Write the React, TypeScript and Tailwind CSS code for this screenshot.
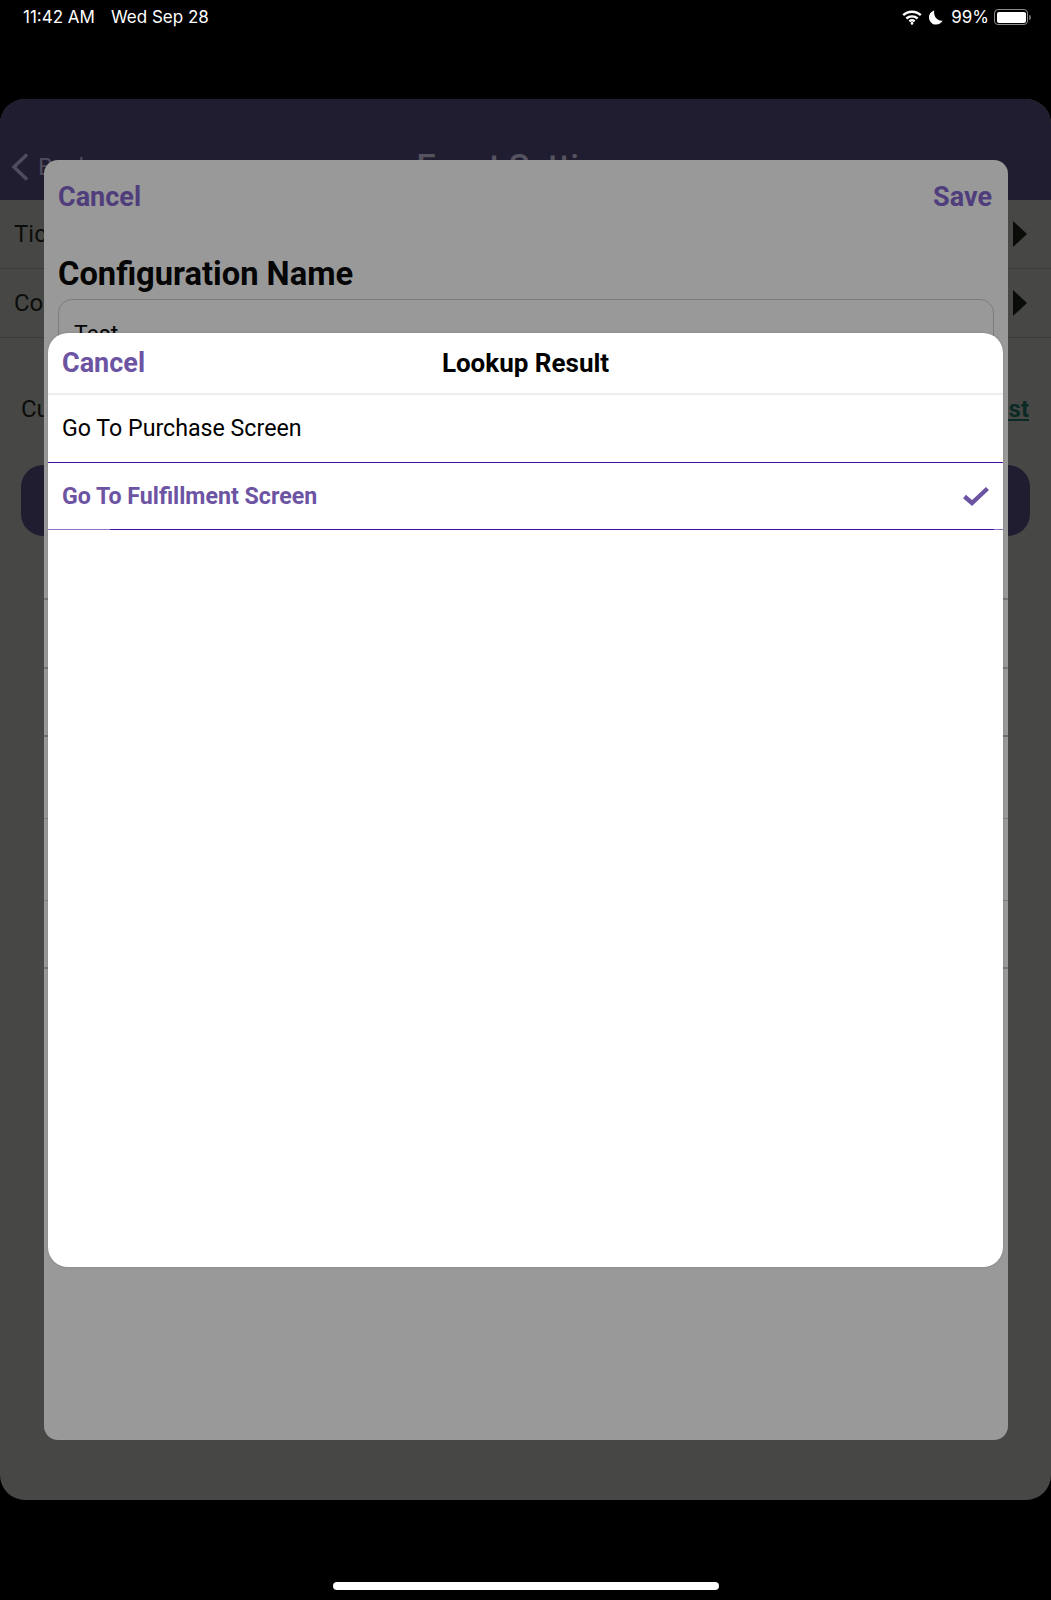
const roboto = "font-['Roboto',sans-serif]"

function WifiIcon() {
  return (
    <svg width="20" height="15" viewBox="0 0 20 15" fill="none" stroke="white" strokeWidth="2.4">
      <path d="M1.2 5.2C6 .6 14 .6 18.8 5.2" />
      <path d="M4.4 8.5C7.4 5.7 12.6 5.7 15.6 8.5" />
      <path d="M7.4 11.4C8.9 10.2 11.1 10.2 12.6 11.4" />
      <circle cx="10" cy="13.4" r="1.3" fill="white" stroke="none" />
    </svg>
  )
}

function MoonIcon() {
  return (
    <svg width="14" height="15" viewBox="0 0 14 15" fill="white">
      <path d="M5.2.6C2.2 1.4 0 4.1 0 7.4 0 11.4 3.2 14.6 7.2 14.6 10 14.6 12.4 13 13.6 10.7 9 11.4 4.3 7.2 5.2.6Z" />
    </svg>
  )
}

function BatteryIcon() {
  return (
    <div className="flex items-center">
      <div className="h-[16px] w-[34px] rounded-[4px] border border-[#8a8a8a] p-[1.5px]">
        <div className="h-full w-full rounded-[2px] bg-white" />
      </div>
      <div className="ml-[1px] h-[5px] w-[2px] rounded-r-[2px] bg-[#6f6f6f]" />
    </div>
  )
}

function StatusBar() {
  return (
    <div className="flex h-[99px] shrink-0 items-start justify-between pl-[23px] pr-[20px] pt-[7px] font-['Inter',sans-serif] text-[17px] leading-[20px] text-white">
      <div className="flex gap-[16px]">
        <span>11:42 AM</span>
        <span>Wed Sep 28</span>
      </div>
      <div className="flex items-center">
        <WifiIcon />
        <div className="ml-[7px]">
          <MoonIcon />
        </div>
        <span className="ml-[8px] mr-[5px]">99%</span>
        <BatteryIcon />
      </div>
    </div>
  )
}

function BackRow({ label }: { label: string }) {
  return (
    <div className="flex h-[69px] items-center justify-between border-b border-[#3b3c39] pl-[14px] pr-[24px] text-[24px] text-[#0c0d0b]">
      <span>{label}</span>
      <div className="h-0 w-0 border-y-[13px] border-l-[14px] border-y-transparent border-l-[#0a0c08]" />
    </div>
  )
}

function BackPage() {
  return (
    <div className={`flex h-[1401px] shrink-0 flex-col overflow-hidden rounded-[25px] bg-[#474845] ${roboto}`}>
      <div className="grid h-[101px] shrink-0 grid-cols-[1fr_auto_1fr] items-start bg-[#211d30] pt-[47px]">
        <div className="mt-[6px] flex items-center pl-[11px] text-[24px] leading-[30px] text-[#4f4b5c]">
          <svg width="18" height="28" viewBox="0 0 18 28" fill="none" stroke="#4f4b5c" strokeWidth="3.6">
            <path d="M16 1.5L3 14L16 26.5" />
          </svg>
          <span className="ml-[9px]">Back</span>
        </div>
        <span className="text-[34px] font-medium leading-[40px] text-[#565360]">Event Settings</span>
      </div>
      <BackRow label="Tickets" />
      <BackRow label="Configurations" />
      <div className="flex items-center justify-between pl-[21px] pr-[22px] pt-[55px] text-[24px] leading-[32px] text-[#0c0d0b]">
        <span>Current Configuration</span>
        <span className="font-bold text-[#0b2a26] underline">Test</span>
      </div>
      <div className="mx-[21px] mt-[40px] h-[71px] rounded-[22px] bg-[#211d30]" />
    </div>
  )
}

function ConfigSheet() {
  return (
    <div className={`absolute left-[44px] top-[160px] flex h-[1280px] w-[964px] flex-col overflow-hidden rounded-[14px] bg-[#999999] ${roboto}`}>
      <div className="flex items-center justify-between pl-[14px] pr-[16px] pt-[22px] text-[27px] font-bold leading-[30px] text-[#4f3d7c]">
        <span>Cancel</span>
        <span>Save</span>
      </div>
      <h2 className="ml-[14px] mt-[42px] text-[32.7px] font-bold leading-[40px] text-[#050505]">Configuration Name</h2>
      <div className="mx-[14px] mt-[5px] h-[72px] shrink-0 rounded-[14px] border-[1.5px] border-[#7d7d7d] px-[15px] pt-[20px] text-[23px] leading-[30px] text-[#050505]">
        Test
      </div>
      <div className="h-[160px] shrink-0" />
      <div className="h-[69px] shrink-0 border-b-2 border-[#777777]" />
      <div className="h-[69px] shrink-0 border-b-2 border-[#777777]" />
      <div className="h-[68px] shrink-0 border-b-2 border-[#6f6f6f]" />
      <div className="h-[82px] shrink-0 border-b border-[#7f7f7f]" />
      <div className="h-[82px] shrink-0 border-b border-[#7f7f7f]" />
      <div className="h-[68px] shrink-0 border-b-2 border-[#777777]" />
    </div>
  )
}

function LookupModal() {
  return (
    <div className={`absolute left-[48px] top-[333px] flex h-[934px] w-[955px] flex-col overflow-hidden rounded-[20px] bg-white shadow-[0_0_3px_rgba(0,0,0,0.15)] ${roboto}`}>
      <div className="relative flex h-[62px] shrink-0 items-center justify-center border-b-[2px] border-[#eeeeee]">
        <span className="absolute left-[14px] top-[15px] text-[27px] font-bold leading-[30px] text-[#6c54a3]">Cancel</span>
        <span className="text-[26px] font-bold text-black">Lookup Result</span>
      </div>
      <div className="flex h-[68px] shrink-0 items-center border-b border-[#4b0f9e] px-[14px] text-[23.2px] text-black">
        Go To Purchase Screen
      </div>
      <div className="relative flex h-[67px] shrink-0 items-center justify-between border-b border-[#4b0f9e] px-[14px] text-[23.2px] font-bold text-[#6c54a3]">
        <span>Go To Fulfillment Screen</span>
        <svg width="26" height="20" viewBox="0 0 26 20" fill="none" stroke="#6c54a3" strokeWidth="4.4">
          <path d="M1.5 10.5L9 17L24.5 2.5" />
        </svg>
        <div className="absolute -bottom-px left-0 h-px w-[62px] bg-[#8f72c4]" />
        <div className="absolute -bottom-px right-0 h-px w-[9px] bg-[#8f72c4]" />
      </div>
    </div>
  )
}

export default function App() {
  return (
    <div className="relative flex h-[1600px] w-[1051px] flex-col overflow-hidden bg-black">
      <StatusBar />
      <BackPage />
      <ConfigSheet />
      <LookupModal />
      <div className="flex flex-1 items-end justify-center pb-[10px]">
        <div className="h-[8px] w-[386px] rounded-full bg-white" />
      </div>
    </div>
  )
}
